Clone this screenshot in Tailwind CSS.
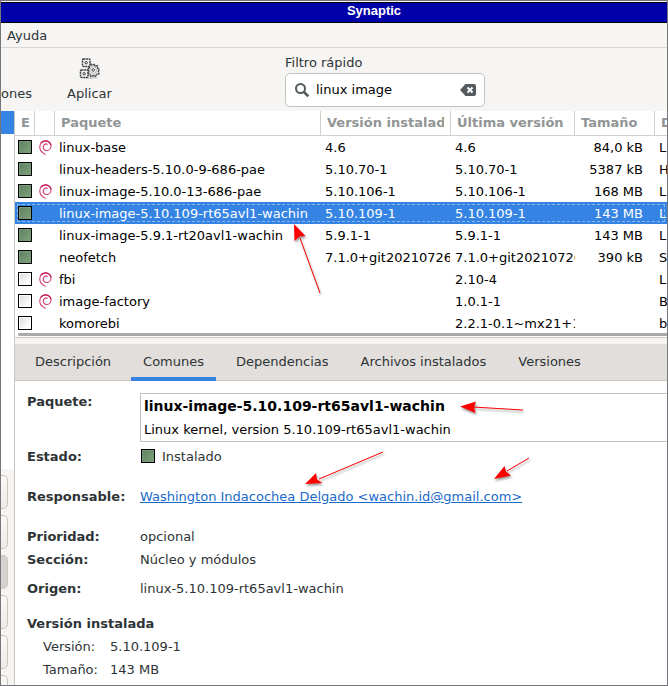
<!DOCTYPE html>
<html lang="es">
<head>
<meta charset="utf-8">
<title>Synaptic</title>
<script src="https://cdn.jsdelivr.net/npm/@tailwindcss/browser@4"></script>
</head>
<body class="relative flex h-screen flex-col overflow-hidden border border-[#75757a] bg-[#f6f5f4] font-['DejaVu_Sans',sans-serif] text-[13px] leading-4 text-[#2e3436]">
<svg class="absolute size-0">
  <defs>
    <linearGradient id="green" x1="0" y1="0" x2="1" y2="1"><stop offset="0" stop-color="#5f7f5f"/><stop offset="1" stop-color="#80a37d"/></linearGradient>
    <linearGradient id="grey" x1="0" y1="0" x2="1" y2="1"><stop offset="0" stop-color="#d8d8d8"/><stop offset="0.7" stop-color="#fbfbfb"/></linearGradient>
    <symbol id="installed" viewBox="0 0 14 14"><rect x=".5" y=".5" width="13" height="13" fill="url(#green)" stroke="#000"/><path d="M1.500 12.500V1.500H12.500" fill="none" stroke="#86a784" stroke-opacity=".6"/></symbol>
    <symbol id="available" viewBox="0 0 14 14"><rect x=".5" y=".5" width="13" height="13" fill="url(#grey)" stroke="#000"/><path d="M1.500 12.500V1.500H12.500V12.500Z" fill="none" stroke="#fff"/></symbol>
    <symbol id="debian" viewBox="0 -1 13 16"><path d="M6.200 14.300C3.500 13 1.100 11 .8 7.500C.6 3.500 3 .9 6.500.9C10.300.8 12.300 3.500 12 6.500C11.700 9.300 9.400 10.700 7.300 10.500C5 10.200 3.900 8.300 4.300 6.300C4.800 4.300 6.800 3.300 8.300 4.300" fill="none" stroke="#d2386f" stroke-width="1.100" stroke-linecap="round"/><path d="M2 3.200C3.500 1.100 6.500.5 9 1.500C10.500 2.200 11.700 3.600 12 5.200" fill="none" stroke="#c8185c" stroke-width="1.300"/></symbol>
  </defs>
</svg>

<header class="mt-px border-y border-black bg-[#0000a8] pb-[3px] text-center font-['Liberation_Sans',sans-serif] font-bold text-white">
  <h1 class="pl-20">Synaptic</h1>
</header>

<nav class="flex border-b border-[#dad8d5] px-1.5 pt-[5px] pb-[3px]">
  <button>Ayuda</button>
</nav>

<div class="flex h-[63px] shrink-0 items-start">
  <button class="mt-[38px] w-[66px] text-left">ones</button>
  <button class="mt-[9px] flex w-[45px] flex-col items-center gap-[5px]">
    <svg class="size-6" viewBox="1 0 24 24" fill="none">
      <ellipse cx="14" cy="20.500" rx="7" ry="1.500" fill="#000" opacity=".15"/>
      <path d="M13.500 6.500L15 8.300L17 7.300L18.300 9.300L20.500 8.700L20.700 11.200L22.500 12.500L21.300 14.500L22 17L19.700 17.300L18.500 19.500L16.300 18.500L14 19.500L13 17.300L11 16.500L11.800 14L10.500 12L12.500 10.800L12 8.500Z" fill="#e4e4e1" stroke="#42474a" stroke-width="1.300" stroke-dasharray="3 .5"/>
      <circle cx="16.200" cy="13" r="3.300" fill="#fafafa" stroke="#aaa" stroke-width=".8"/><circle cx="16.200" cy="13" r="1.300" fill="#fff" stroke="#333" stroke-width=".9"/>
      <rect x="5.500" y="2" width="7.500" height="7.500" rx="1" fill="#f4f4f1" stroke="#3c4144" stroke-width="1.500" stroke-dasharray="2 .6"/><circle cx="9.200" cy="5.700" r="1.200" fill="#fff" stroke="#333"/>
      <rect x="3.500" y="13" width="7.500" height="7.500" rx="1" fill="#f4f4f1" stroke="#3c4144" stroke-width="1.500" stroke-dasharray="2 .6"/><circle cx="7.200" cy="16.700" r="1.200" fill="#fff" stroke="#333"/>
    </svg>
    <span>Aplicar</span>
  </button>
  <div class="mt-[7px] ml-[173px] flex w-[200px] flex-col gap-0.5">
    <label for="filter">Filtro rápido</label>
    <div class="flex h-[34px] items-center rounded-[5px] border border-[#c6c3bf] bg-white px-2">
      <svg class="size-4 shrink-0" viewBox="0 0 16 16" fill="none" stroke="#555b5e"><circle cx="6.500" cy="6.500" r="4.500" stroke-width="2"/><path d="M10 10L14.300 14.300" stroke-width="2.600"/></svg>
      <input id="filter" type="text" value="linux image" class="ml-1.5 min-w-0 flex-1 text-black outline-none">
      <button aria-label="Borrar"><svg class="size-4" viewBox="0 0 16 16"><path d="M5.500 2H14Q16 2 16 4V12Q16 14 14 14H5.500L0 8Z" fill="#555b5e"/><path d="M7.500 5.500L12.500 10.500M12.500 5.500L7.500 10.500" stroke="#fff" stroke-width="2"/></svg></button>
    </div>
  </div>
</div>

<div class="flex min-h-0 flex-1">
  <aside class="flex w-[13px] shrink-0 flex-col">
    <div class="min-h-0 flex-1 bg-white"><div class="h-[23px] bg-[#3584e4]"></div></div>
    <div class="flex h-[216px] shrink-0 flex-col gap-1.5 overflow-hidden pt-1.5 pr-[6px]">
      <button aria-label="Secciones" class="h-[34px] shrink-0 rounded-r-[5px] border border-l-0 border-[#cdc7c2] bg-linear-to-b from-[#faf9f8] to-[#edebe9]"></button>
      <button aria-label="Estado" class="h-[34px] shrink-0 rounded-r-[5px] border border-l-0 border-[#cdc7c2] bg-linear-to-b from-[#faf9f8] to-[#edebe9]"></button>
      <button aria-label="Origen" class="h-[34px] shrink-0 rounded-r-[5px] border border-l-0 border-[#cdc7c2] bg-[#d6d1cd]"></button>
      <button aria-label="Filtros" class="h-[34px] shrink-0 rounded-r-[5px] border border-l-0 border-[#cdc7c2] bg-linear-to-b from-[#faf9f8] to-[#edebe9]"></button>
      <button aria-label="Resultados" class="h-[34px] shrink-0 rounded-r-[5px] border border-l-0 border-[#cdc7c2] bg-linear-to-b from-[#faf9f8] to-[#edebe9]"></button>
      <button aria-label="Arquitectura" class="h-[34px] shrink-0 rounded-r-[5px] border border-l-0 border-[#cdc7c2] bg-linear-to-b from-[#faf9f8] to-[#edebe9]"></button>
    </div>
  </aside>

  <main class="flex min-w-0 flex-1 flex-col border-l border-[#cdc7c2] bg-white">
    <div class="h-[222px] shrink-0 overflow-hidden">
    <table class="w-full table-fixed border-separate border-spacing-0 whitespace-nowrap text-black [&_td:nth-child(n+3)]:pt-0.5">
      <colgroup><col class="w-[20px]"><col class="w-[20px]"><col class="w-[266px]"><col class="w-[130px]"><col class="w-[124px]"><col class="w-[80px]"><col></colgroup>
      <thead>
        <tr class="h-[25px] text-left text-[#929595]">
          <th class="overflow-hidden border-r border-b border-[#d5d0cc] pl-1.5">E</th>
          <th class="border-r border-b border-[#d5d0cc]"></th>
          <th class="border-r border-b border-[#d5d0cc] pl-1.5">Paquete</th>
          <th class="border-r border-b border-[#d5d0cc] px-1.5"><div class="overflow-hidden">Versión instalada</div></th>
          <th class="border-r border-b border-[#d5d0cc] pl-1.5">Última versión</th>
          <th class="border-r border-b border-[#d5d0cc] pl-1.5">Tamaño</th>
          <th class="overflow-hidden border-b border-[#d5d0cc] pl-1.5">D</th>
        </tr>
      </thead>
      <tbody>
        <tr class="h-[22px]"><td class="pl-[3px]"><svg class="size-3.5"><use href="#installed"/></svg></td><td class="pl-1"><svg class="h-4 w-[13px]"><use href="#debian"/></svg></td><td class="pl-1">linux-base</td><td class="pl-1">4.6</td><td class="pl-1">4.6</td><td class="pr-3 text-right">84,0 kB</td><td class="overflow-hidden pl-1">Li</td></tr>
        <tr class="h-[22px]"><td class="pl-[3px]"><svg class="size-3.5"><use href="#installed"/></svg></td><td></td><td class="pl-1">linux-headers-5.10.0-9-686-pae</td><td class="pl-1">5.10.70-1</td><td class="pl-1">5.10.70-1</td><td class="pr-3 text-right">5387 kB</td><td class="overflow-hidden pl-1">H</td></tr>
        <tr class="h-[22px]"><td class="pl-[3px]"><svg class="size-3.5"><use href="#installed"/></svg></td><td class="pl-1"><svg class="h-4 w-[13px]"><use href="#debian"/></svg></td><td class="pl-1">linux-image-5.10.0-13-686-pae</td><td class="pl-1">5.10.106-1</td><td class="pl-1">5.10.106-1</td><td class="pr-3 text-right">168 MB</td><td class="overflow-hidden pl-1">Li</td></tr>
        <tr class="h-[22px] bg-[#3584e4] text-white outline-1 -outline-offset-3 outline-dashed outline-[#86b5ef]"><td class="pl-[3px]"><svg class="size-3.5"><use href="#installed"/></svg></td><td></td><td class="pl-1">linux-image-5.10.109-rt65avl1-wachin</td><td class="pl-1">5.10.109-1</td><td class="pl-1">5.10.109-1</td><td class="pr-3 text-right">143 MB</td><td class="overflow-hidden pl-1">Li</td></tr>
        <tr class="h-[22px]"><td class="pl-[3px]"><svg class="size-3.5"><use href="#installed"/></svg></td><td></td><td class="pl-1">linux-image-5.9.1-rt20avl1-wachin</td><td class="pl-1">5.9.1-1</td><td class="pl-1">5.9.1-1</td><td class="pr-3 text-right">143 MB</td><td class="overflow-hidden pl-1">Li</td></tr>
        <tr class="h-[22px]"><td class="pl-[3px]"><svg class="size-3.5"><use href="#installed"/></svg></td><td></td><td class="pl-1">neofetch</td><td class="pr-px pl-1"><div class="overflow-hidden">7.1.0+git20210726</div></td><td class="pl-1"><div class="overflow-hidden">7.1.0+git20210726</div></td><td class="pr-3 text-right">390 kB</td><td class="overflow-hidden pl-1">S</td></tr>
        <tr class="h-[22px]"><td class="pl-[3px]"><svg class="size-3.5"><use href="#available"/></svg></td><td class="pl-1"><svg class="h-4 w-[13px]"><use href="#debian"/></svg></td><td class="pl-1">fbi</td><td></td><td class="pl-1">2.10-4</td><td></td><td class="overflow-hidden pl-1">Li</td></tr>
        <tr class="h-[22px]"><td class="pl-[3px]"><svg class="size-3.5"><use href="#available"/></svg></td><td class="pl-1"><svg class="h-4 w-[13px]"><use href="#debian"/></svg></td><td class="pl-1">image-factory</td><td></td><td class="pl-1">1.0.1-1</td><td></td><td class="overflow-hidden pl-1">B</td></tr>
        <tr class="h-[22px]"><td class="pl-[3px]"><svg class="size-3.5"><use href="#available"/></svg></td><td></td><td class="pl-1">komorebi</td><td></td><td class="pl-1"><div class="overflow-hidden">2.2.1-0.1~mx21+1</div></td><td></td><td class="overflow-hidden pl-1">b</td></tr>
      </tbody>
    </table>
    </div>
    <div class="ml-[3px] h-[3px] shrink-0 rounded-l-full bg-[#a7aca9]"></div>
    <div class="mt-px h-[7px] shrink-0 border-t border-[#cdc7c2] bg-[#f6f5f4]"></div>
    <div role="tablist" class="flex h-[37px] shrink-0 gap-2 border-b border-[#cdc7c2] bg-[#e1dedb] pl-2">
      <button role="tab" class="-mb-px border-b-4 border-transparent px-3 pt-0.5">Descripción</button>
      <button role="tab" aria-selected="true" class="-mb-px border-b-4 border-[#3584e4] px-3 pt-0.5">Comunes</button>
      <button role="tab" class="-mb-px border-b-4 border-transparent px-3 pt-0.5">Dependencias</button>
      <button role="tab" class="-mb-px border-b-4 border-transparent px-3 pt-0.5">Archivos instalados</button>
      <button role="tab" class="-mb-px border-b-4 border-transparent px-3 pt-0.5">Versiones</button>
    </div>

    <section class="min-h-0 flex-1 overflow-hidden pt-3 pl-3 whitespace-nowrap">
      <div class="flex"><strong class="w-[113px] shrink-0 pt-px">Paquete:</strong>
        <div class="flex h-[49px] flex-1 flex-col gap-2 border border-r-0 border-[#c6c3bf] pt-1 pl-[3px] text-black">
          <b class="text-[14px] leading-4">linux-image-5.10.109-rt65avl1-wachin</b>
          <span>Linux kernel, version 5.10.109-rt65avl1-wachin</span>
        </div>
      </div>
      <div class="mt-[7px] flex"><strong class="w-[113px] shrink-0">Estado:</strong><svg class="mr-[7px] ml-px size-3.5"><use href="#installed"/></svg><span>Instalado</span></div>
      <div class="mt-6 flex"><strong class="w-[113px] shrink-0">Responsable:</strong><a href="mailto:wachin.id@gmail.com" class="text-[#1b6acb] underline">Washington Indacochea Delgado &lt;wachin.id@gmail.com&gt;</a></div>
      <div class="mt-6 flex"><strong class="w-[113px] shrink-0">Prioridad:</strong><span>opcional</span></div>
      <div class="mt-[7px] flex"><strong class="w-[113px] shrink-0">Sección:</strong><span>Núcleo y módulos</span></div>
      <div class="mt-[13px] flex"><strong class="w-[113px] shrink-0">Origen:</strong><span>linux-5.10.109-rt65avl1-wachin</span></div>
      <h2 class="mt-[19px] font-bold">Versión instalada</h2>
      <div class="mt-[7px] flex pl-4"><span class="w-[67px]">Versión:</span><span>5.10.109-1</span></div>
      <div class="mt-[7px] flex pl-4"><span class="w-[67px]">Tamaño:</span><span>143 MB</span></div>
    </section>
  </main>
</div>

<svg class="pointer-events-none absolute -top-px -left-px h-[686px] w-[668px] drop-shadow-[1px_2px_1px_rgba(0,0,0,0.4)]" viewBox="0 0 668 686" fill="#f00" stroke="#f00">
  <path d="M300 238L320 293M473 407L523 410M319 479L383 452M507 471L529 458"/>
  <path stroke="none" d="M294 224L305.500 236L299.500 236.500L294.500 241ZM460 406.500L476 401.500L474 407.500L475.500 413ZM305 484L316 473L317 479.500L322.500 483ZM494 479L504.500 466L506 471.500L511 475.500Z"/>
</svg>
</body>
</html>
